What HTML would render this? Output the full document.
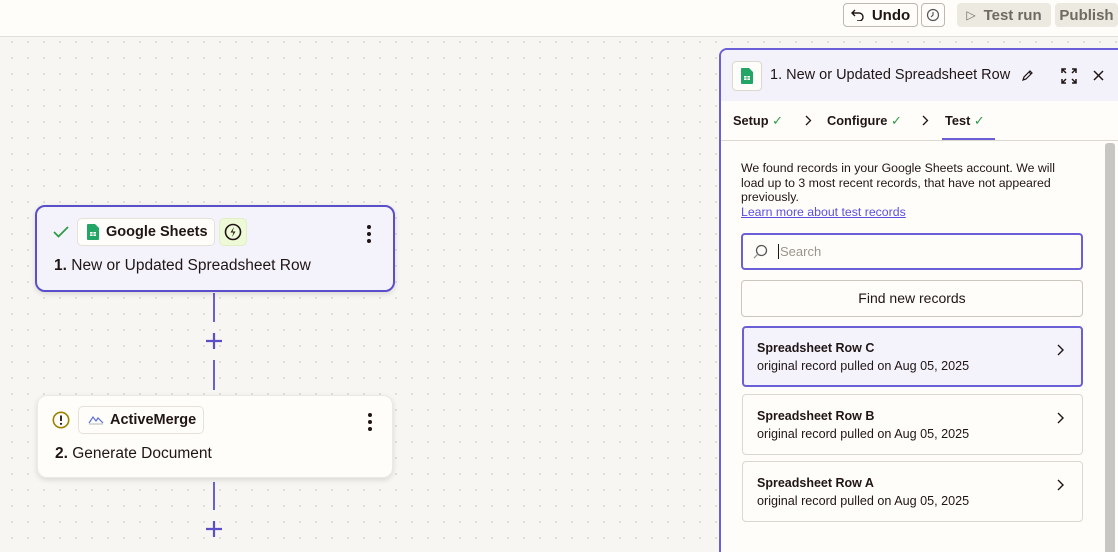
<!DOCTYPE html>
<html style="width:1118px;height:552px;overflow:hidden"><head><style>
*{box-sizing:border-box;margin:0;padding:0}
body{width:1118px;height:552px;overflow:hidden;font-family:"Liberation Sans",sans-serif;color:#201515;background:#f7f6f2;background-image:radial-gradient(#dcd9d1 0.9px,transparent 1.1px);background-size:16px 16px;background-position:4px 2px;position:relative}
.top{position:absolute;left:0;top:0;width:1118px;height:37px;background:#fffdf9;border-bottom:1px solid #e2dfd8}
.btn{position:absolute;top:3px;height:24px;border-radius:4px;font-size:15px;display:flex;align-items:center;justify-content:center}
.node{position:absolute;border-radius:10px;box-shadow:0 2px 6px rgba(0,0,0,.12)}
.chip{position:absolute;height:28px;border:1px solid #e6e2d9;border-radius:5px;background:#fffdf9;font-size:14.5px;font-weight:bold;display:flex;align-items:center}
.title{position:absolute;font-size:15.5px}
.dots{position:absolute;width:4px}
.dots i{display:block;width:4px;height:4px;border-radius:2px;background:#201515;margin-bottom:3px}
.vl{position:absolute;left:213px;width:2px;background:#6a5fd6}
.plus{position:absolute;left:205px;width:18px;height:18px}
.panel{position:absolute;left:719px;top:48px;width:402px;height:504px;border:2px solid #6a5fd6;border-bottom:none;border-radius:8px 0 0 0;background:#fffdf9;overflow:hidden}
.rec{position:absolute;left:21px;width:341px;height:61px;border:1px solid #dcd8cf;border-radius:4px;background:#fffdf9}
.rec b{position:absolute;left:14px;top:14px;font-size:12.5px}
.rec span{position:absolute;left:14px;top:32px;font-size:12.6px}
.rec svg{position:absolute;right:18px;top:17px}
.ck{color:#2e9b47;font-weight:normal}
</style></head><body>
<div class="top">
 <div class="btn" style="left:843px;width:75px;border:1px solid #bdb9b0;background:#fffdf9;color:#201515;font-weight:bold"><svg width="14" height="12" viewBox="0 0 14 12" style="margin-right:7px"><path d="M4 1L1 4l3 3M1 4h7a4 4 0 010 8H6" stroke="#201515" fill="none" stroke-width="1.4"/></svg>Undo</div>
 <div class="btn" style="left:921px;width:24px;border:1px solid #bdb9b0;background:#fffdf9"><svg width="14" height="14" viewBox="0 0 14 14"><circle cx="7" cy="7" r="5.5" fill="none" stroke="#555" stroke-width="1.2"/><path d="M7 4v3l-2 2" stroke="#555" fill="none" stroke-width="1.2"/></svg></div>
 <div class="btn" style="left:957px;width:94px;background:#ece9e1;color:#6f6a62;font-weight:bold"><span style="margin-right:8px;font-size:12px;font-weight:normal">▷</span>Test run</div>
 <div class="btn" style="left:1055px;width:63px;background:#ece9e1;color:#6f6a62;font-weight:bold">Publish</div>
</div>

<div class="vl" style="top:293px;height:29px"></div>
<svg class="plus" style="top:332px" viewBox="0 0 18 18"><path d="M9 1v16M1 9h16" stroke="#5b4fc9" stroke-width="2.2"/></svg>
<div class="vl" style="top:360px;height:30px"></div>
<div class="vl" style="top:482px;height:28px"></div>
<svg class="plus" style="top:520px" viewBox="0 0 18 18"><path d="M9 1v16M1 9h16" stroke="#5b4fc9" stroke-width="2.2"/></svg>

<div class="node" style="left:35px;top:205px;width:360px;height:87px;border:2px solid #5b4fc9;background:#f4f3fc">
 <svg style="position:absolute;left:16px;top:19px" width="16" height="12" viewBox="0 0 16 12"><path d="M1 6l4.5 4.5L15 1" stroke="#2e9b47" stroke-width="1.8" fill="none"/></svg>
 <div class="chip" style="left:40px;top:11px;width:138px"><svg style="margin:0 7px 0 9px" width="12" height="16" viewBox="0 0 12 16"><path d="M0 1a1 1 0 011-1h7l4 4v11a1 1 0 01-1 1H1a1 1 0 01-1-1z" fill="#23a566"/><rect x="3" y="8" width="6" height="4" fill="#fff"/><path d="M3 10h6M6 8v4" stroke="#23a566" stroke-width=".8"/></svg>Google Sheets</div>
 <div class="chip" style="left:182px;top:11px;width:28px;justify-content:center;background:#eef9d8;border-color:#e2eec8"><svg width="18" height="18" viewBox="0 0 18 18"><circle cx="9" cy="9" r="7.5" fill="none" stroke="#201515" stroke-width="1.6"/><path d="M10 4L6.5 9.5h3L8 14l3.5-5.5h-3z" fill="#201515"/></svg></div>
 <div class="dots" style="left:330px;top:18px"><i></i><i></i><i></i></div>
 <div class="title" style="left:17px;top:50px"><b>1.</b> New or Updated Spreadsheet Row</div>
</div>

<div class="node" style="left:37px;top:395px;width:356px;height:83px;background:#fffdf9;border:1px solid #eceae4">
 <svg style="position:absolute;left:14px;top:15px" width="18" height="18" viewBox="0 0 18 18"><circle cx="9" cy="9" r="7.7" fill="none" stroke="#a08200" stroke-width="1.6"/><path d="M9 4.5v5.5" stroke="#201515" stroke-width="1.8"/><circle cx="9" cy="12.8" r="1.1" fill="#201515"/></svg>
 <div class="chip" style="left:40px;top:10px;width:126px"><svg style="margin:0 6px 0 9px" width="16" height="10" viewBox="0 0 16 10"><path d="M1 8l4-6 3 4 2-3 5 5" stroke="#5a6fd8" fill="none" stroke-width="1.2"/><path d="M1 9h14" stroke="#9aa" stroke-width=".8"/></svg>ActiveMerge</div>
 <div class="dots" style="left:330px;top:17px"><i></i><i></i><i></i></div>
 <div class="title" style="left:17px;top:49px"><b>2.</b> Generate Document</div>
</div>

<div class="panel">
 <div style="position:absolute;left:0;top:0;width:400px;height:51px;background:#f3f2fb"></div>
 <div style="position:absolute;left:11px;top:11px;width:30px;height:30px;border:1px solid #dcd8cf;border-radius:4px;background:#fffdf9;display:flex;align-items:center;justify-content:center"><svg width="12" height="16" viewBox="0 0 12 16"><path d="M0 1a1 1 0 011-1h7l4 4v11a1 1 0 01-1 1H1a1 1 0 01-1-1z" fill="#23a566"/><rect x="3" y="8" width="6" height="4" fill="#fff"/><path d="M3 10h6M6 8v4" stroke="#23a566" stroke-width=".8"/></svg></div>
 <div style="position:absolute;left:49px;top:17px;font-size:14.5px">1. New or Updated Spreadsheet Row</div>
 <svg style="position:absolute;left:300px;top:19px" width="13" height="13" viewBox="0 0 13 13"><path d="M2 11l1-3 6-6 2 2-6 6z M8 3l2 2" stroke="#201515" fill="none" stroke-width="1.2"/></svg>
 <svg style="position:absolute;left:340px;top:18px" width="16" height="16" viewBox="0 0 16 16" stroke="#201515" stroke-width="1.5" fill="none"><path d="M1 5V1h4M1 1l4 4M11 1h4v4M15 1l-4 4M1 11v4h4M1 15l4-4M15 11v4h-4M15 15l-4-4"/></svg>
 <svg style="position:absolute;left:372px;top:20px" width="11" height="11" viewBox="0 0 11 11"><path d="M1 1l9 9M10 1l-9 9" stroke="#201515" stroke-width="1.5"/></svg>
 <div style="position:absolute;left:0;top:51px;width:400px;height:40px;border-bottom:1px solid #dcd8cf;font-size:12.8px;font-weight:bold">
  <span style="position:absolute;left:12px;top:12px">Setup <span class="ck">✓</span></span>
  <svg style="position:absolute;left:84px;top:14px" width="7" height="11" viewBox="0 0 7 11"><path d="M1 1l4.5 4.5L1 10" stroke="#201515" fill="none" stroke-width="1.3"/></svg>
  <span style="position:absolute;left:106px;top:12px">Configure <span class="ck">✓</span></span>
  <svg style="position:absolute;left:201px;top:14px" width="7" height="11" viewBox="0 0 7 11"><path d="M1 1l4.5 4.5L1 10" stroke="#201515" fill="none" stroke-width="1.3"/></svg>
  <span style="position:absolute;left:224px;top:12px">Test <span class="ck">✓</span></span>
  <div style="position:absolute;left:221px;top:37px;width:53px;height:2px;background:#6a5fd6"></div>
 </div>
 <div style="position:absolute;left:384px;top:93px;width:10px;height:420px;background:#c8c6c2;border-radius:3px"></div>
 <div style="position:absolute;left:20px;top:111px;width:330px;font-size:12.3px;line-height:14.7px">We found records in your Google Sheets account. We will load up to 3 most recent records, that have not appeared previously.<br><span style="color:#5b4fe0;text-decoration:underline">Learn more about test records</span></div>
 <div style="position:absolute;left:20px;top:183px;width:342px;height:37px;border:2px solid #6a5fd6;border-radius:4px;background:#fffdf9"><svg style="position:absolute;left:9px;top:9px" width="16" height="16" viewBox="0 0 16 16"><circle cx="9.5" cy="6.5" r="5" fill="none" stroke="#555" stroke-width="1.3"/><path d="M6 10l-4 4" stroke="#999" stroke-width="1.3"/></svg><span style="position:absolute;left:35px;top:9px;font-size:13px;color:#9a958c;border-left:1px solid #201515;padding-left:1px">Search</span></div>
 <div style="position:absolute;left:20px;top:230px;width:342px;height:37px;border:1px solid #cbc7bd;border-radius:4px;font-size:14px;text-align:center;line-height:35px">Find new records</div>
 <div class="rec" style="top:276px;border:2px solid #6a5fd6;background:#f4f3fc"><b style="left:13px;top:13px">Spreadsheet Row C</b><span style="left:13px;top:31px">original record pulled on Aug 05, 2025</span><svg style="right:17px;top:16px" width="8" height="12" viewBox="0 0 8 12"><path d="M2 1l5 5-5 5" stroke="#201515" fill="none" stroke-width="1.4"/></svg></div>
 <div class="rec" style="top:344px"><b>Spreadsheet Row B</b><span>original record pulled on Aug 05, 2025</span><svg width="8" height="12" viewBox="0 0 8 12"><path d="M2 1l5 5-5 5" stroke="#201515" fill="none" stroke-width="1.4"/></svg></div>
 <div class="rec" style="top:411px"><b>Spreadsheet Row A</b><span>original record pulled on Aug 05, 2025</span><svg width="8" height="12" viewBox="0 0 8 12"><path d="M2 1l5 5-5 5" stroke="#201515" fill="none" stroke-width="1.4"/></svg></div>
</div>
</body></html>
